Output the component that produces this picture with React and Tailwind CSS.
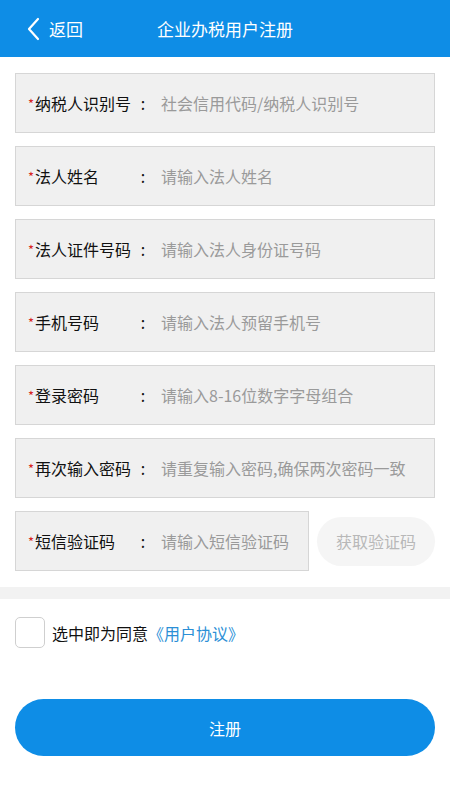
import React from "react";

const fields = [
  { label: "纳税人识别号", ph: "社会信用代码/纳税人识别号" },
  { label: "法人姓名", ph: "请输入法人姓名" },
  { label: "法人证件号码", ph: "请输入法人身份证号码" },
  { label: "手机号码", ph: "请输入法人预留手机号" },
  { label: "登录密码", ph: "请输入8-16位数字字母组合" },
  { label: "再次输入密码", ph: "请重复输入密码,确保两次密码一致" },
];

function Field({ label, ph, className = "" }) {
  return (
    <div className={"h-[60px] bg-[#f0f0f0] border border-[#d6d6d6] flex items-center pl-[12px] " + className}>
      <div className="w-[108px] flex items-center text-[16px] text-[#111]">
        <span className="text-[#d81e1e] text-[13px] leading-none self-start mt-[6px] mr-[1px]">*</span>
        <span>{label}</span>
      </div>
      <span className="w-[14px] text-center text-[16px] text-[#111]">:</span>
      <span className="ml-[11px] text-[16px] text-[#9a9a9a] whitespace-nowrap">{ph}</span>
    </div>
  );
}

export default function App() {
  return (
    <div
      className="w-[450px] h-[800px] bg-white flex flex-col"
      style={{ fontFamily: '"Noto Sans CJK SC", "Noto Sans", sans-serif' }}
    >
      <div className="h-[57px] bg-[#0e8de6] flex items-center relative text-white shrink-0">
        <div className="flex items-center pl-[26px]">
          <svg width="14" height="24" viewBox="0 0 14 24" fill="none">
            <path d="M12 2 L3 12 L12 22" stroke="white" strokeWidth="2.2" strokeLinecap="round" strokeLinejoin="round" />
          </svg>
          <span className="ml-[9px] text-[17px]">返回</span>
        </div>
        <div className="absolute left-0 right-0 text-center text-[17px] pointer-events-none">企业办税用户注册</div>
      </div>

      <div className="flex flex-col gap-[13px] px-[15px] pt-[16px]">
        {fields.map((f) => (
          <Field key={f.label} {...f} />
        ))}
        <div className="flex items-center gap-[8px]">
          <Field label="短信验证码" ph="请输入短信验证码" className="w-[294px] shrink-0" />
          <div className="flex-1 h-[49px] rounded-full bg-[#f5f5f5] flex items-center justify-center text-[16px] text-[#b8b8b8]">
            获取验证码
          </div>
        </div>
      </div>

      <div className="h-[12px] bg-[#f2f2f2] mt-[16px]" />

      <div className="flex items-center px-[15px] mt-[18px]">
        <div className="w-[30px] h-[31px] border border-[#cfcfcf] rounded-[5px] bg-white" />
        <span className="ml-[7px] text-[16px] text-[#111]">选中即为同意</span>
        <span className="text-[16px] text-[#2b8fd6]">《用户协议》</span>
      </div>

      <div className="px-[15px] mt-[51px]">
        <div className="h-[57px] rounded-full bg-[#0e8de6] flex items-center justify-center text-white text-[16px]">
          注册
        </div>
      </div>
    </div>
  );
}
